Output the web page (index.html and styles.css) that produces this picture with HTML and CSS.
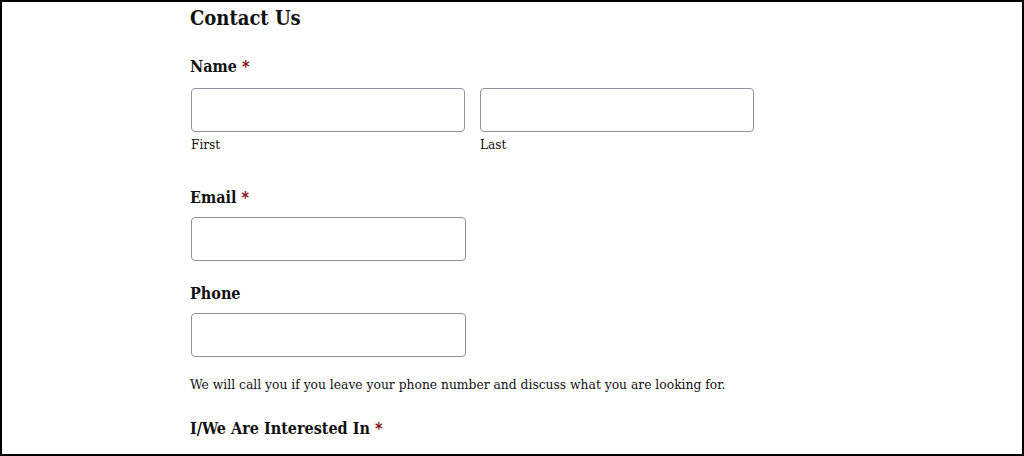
FILE: index.html
```html
<!DOCTYPE html>
<html>
<head>
<meta charset="utf-8">
<link rel="stylesheet" href="styles.css">
</head>
<body>
<div class="frame">
  <form class="form">
    <h2 class="title">Contact Us</h2>
    <div class="field">
      <div class="label">Name <span class="req">*</span></div>
      <div class="row">
        <div class="sub">
          <input class="input" type="text">
          <div class="sublabel">First</div>
        </div>
        <div class="sub">
          <input class="input" type="text">
          <div class="sublabel">Last</div>
        </div>
      </div>
    </div>
    <div class="field field-email">
      <div class="label">Email <span class="req">*</span></div>
      <input class="input" type="text">
    </div>
    <div class="field field-phone">
      <div class="label">Phone</div>
      <input class="input" type="text">
      <div class="desc">We will call you if you leave your phone number and discuss what you are looking for.</div>
    </div>
    <div class="field field-interest">
      <div class="label">I/We Are Interested In <span class="req">*</span></div>
    </div>
  </form>
</div>
</body>
</html>
```
FILE: styles.css
```css
html, body {
  margin: 0;
  padding: 0;
  background: #fff;
}
.frame {
  box-sizing: border-box;
  width: 1024px;
  height: 456px;
  border: 2px solid #000;
  overflow: hidden;
  font-family: "DejaVu Serif Condensed", "DejaVu Serif", serif;
  font-stretch: semi-condensed;
  color: #111;
}
.form {
  padding-left: 188px;
}
.title {
  margin: 0;
  padding-top: 3px;
  font-size: 20px;
  line-height: 26px;
  font-weight: bold;
}
.label {
  font-size: 16px;
  font-weight: bold;
  line-height: 22px;
}
.req {
  color: #7a0000;
}
.field {
  margin-top: 25px;
}
.row {
  display: flex;
  gap: 14px;
  margin-top: 10px;
}
.sub {
  display: flex;
  flex-direction: column;
}
.input {
  box-sizing: border-box;
  width: 274px;
  height: 44px;
  margin: 0 0 0 1px;
  border: 1px solid #8a93a0;
  border-radius: 4px;
  background: #fff;
  display: block;
}
.sublabel {
  font-size: 13.5px;
  line-height: 18px;
  margin-top: 3px;
  padding-left: 1px;
}
.field-email {
  margin-top: 34px;
}
.field-email .input,
.field-phone .input {
  margin-top: 8px;
  width: 275px;
}
.field-phone {
  margin-top: 22px;
}
.desc {
  font-size: 13.7px;
  line-height: 18px;
  margin-top: 18px;
}
.field-interest {
  margin-top: 25px;
}
```
